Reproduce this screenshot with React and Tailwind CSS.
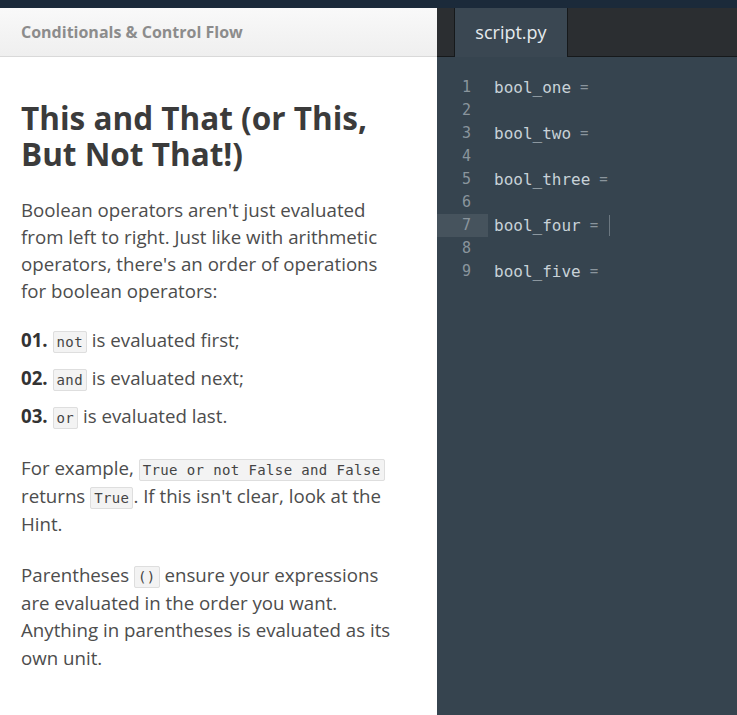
import React from 'react';

const sans = { fontFamily: '"Open Sans", "Noto Sans", sans-serif' };

// --- Inline code chip ---
const Code = ({ children }) => (
    <code className="font-['DejaVu_Sans_Mono',monospace] text-[14px] leading-none tracking-[0.38px] text-[#444] bg-[#f3f3f3] border border-[#dedede] rounded-[2px] px-[3px] py-[2px]">
        {children}
    </code>
);

const lines = [
    { n: 1, text: 'bool_one' },
    { n: 2 },
    { n: 3, text: 'bool_two' },
    { n: 4 },
    { n: 5, text: 'bool_three' },
    { n: 6 },
    { n: 7, text: 'bool_four', active: true },
    { n: 8 },
    { n: 9, text: 'bool_five' },
];

function Lesson() {
    return (
        <div className="w-[437px] flex-shrink-0 bg-white flex flex-col">
            <div className="h-[49px] flex items-center px-[21px] bg-gradient-to-b from-[#f9f9f9] to-[#efefef] border-b border-[#d9d9d9]">
                <span className="font-['Open_Sans'] font-bold text-[16px] text-[#8c8c8c]">Conditionals &amp; Control Flow</span>
            </div>
            <div className="pl-[21px] pr-[37px] pt-[43px] text-[#4d4d4d] font-['Open_Sans']">
                <h1 className="font-bold text-[31.5px] leading-[36px] text-[#3b3b3b]">
                    This and That (or This, But Not That!)
                </h1>
                <p className="mt-[24px] text-[18.7px] leading-[27px]">
                    Boolean operators aren't just evaluated from left to right. Just like with arithmetic operators, there's an order of operations for boolean operators:
                </p>
                <div className="mt-[22px] flex flex-col gap-[11px] text-[18.7px] leading-[27px]">
                    <div><b className="text-[#333]">01.</b> <Code>not</Code> is evaluated first;</div>
                    <div><b className="text-[#333]">02.</b> <Code>and</Code> is evaluated next;</div>
                    <div><b className="text-[#333]">03.</b> <Code>or</Code> is evaluated last.</div>
                </div>
                <p className="mt-[25px] text-[18.7px] leading-[28px]">
                    For example, <Code>True or not False and False</Code> returns <Code>True</Code>. If this isn't clear, look at the Hint.
                </p>
                <p className="mt-[23px] text-[18.7px] leading-[27.7px]">
                    Parentheses <Code>()</Code> ensure your expressions are evaluated in the order you want. Anything in parentheses is evaluated as its own unit.
                </p>
            </div>
        </div>
    );
}

function Editor() {
    return (
        <div className="flex-1 flex flex-col bg-[#36444f]">
            <div className="h-[49px] flex bg-[#2b2e31] border-b border-[#16191b]">
                <div className="w-[18px] border-r border-[#16191b]" />
                <div className="w-[112px] bg-[#3a4752] flex items-center justify-center -mb-px">
                    <span className="font-['Open_Sans'] text-[18px] text-[#e6ebee]">script.py</span>
                </div>
                <div className="flex-1 border-l border-[#16191b]" />
            </div>
            <div className="pt-[19px] flex-1">
                {lines.map(line => (
                    <div key={line.n} className="flex h-[23px] items-center font-['DejaVu_Sans_Mono',monospace] text-[16px]">
                        <div className={`w-[51px] h-full flex items-center justify-end pr-[17px] text-[#8a959d] text-[15px] ${line.active ? 'bg-[#46535d]' : ''}`}>
                            {line.n}
                        </div>
                        <div className="pl-[6px] flex items-center text-[#c8d2d8]">
                            {line.text && (
                                <>
                                    <span>{line.text}</span>
                                    <span className="ml-[9px] text-[#8a959d] text-[14px]">=</span>
                                    {line.active && <span className="ml-[11px] w-px h-[21px] bg-[#6b7780]" />}
                                </>
                            )}
                        </div>
                    </div>
                ))}
            </div>
        </div>
    );
}

export default function App() {
    return (
        <div className="w-[737px] h-[715px] flex flex-col overflow-hidden" style={sans}>
            <div className="h-[8px] bg-[#1b2a3a]" />
            <div className="flex-1 flex">
                <Lesson />
                <Editor />
            </div>
        </div>
    );
}
